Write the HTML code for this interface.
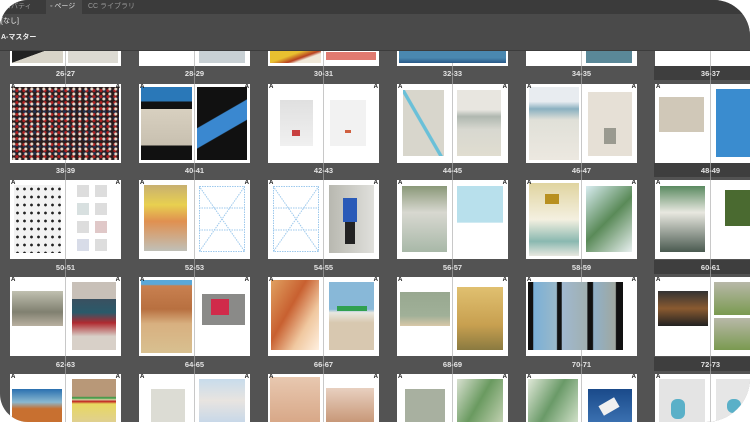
<!DOCTYPE html>
<html><head><meta charset="utf-8"><style>
html,body{margin:0;padding:0;background:#fff;width:750px;height:422px;overflow:hidden}
#w{position:absolute;left:0;top:0;width:750px;height:422px;background:#535353;border-radius:28px 36px 44px 28px;overflow:hidden;font-family:"Liberation Sans","Noto Sans CJK JP",sans-serif}
.sp{position:absolute;width:1px;background:#8a8a8a;top:50px;height:372px}
.s{position:absolute;width:111px;height:79px;background:#fff;overflow:hidden}
.s:before{content:"";position:absolute;left:55px;top:0;width:1px;height:100%;background:#c8c8c8}
.s i{position:absolute;display:block}
.s b{position:absolute;top:0;font-size:6px;font-weight:bold;color:#111;line-height:7px}
.s b.l{left:1px}.s b.r{right:1px}
.lb{position:absolute;width:111px;text-align:center;font-size:7.5px;color:#e4e4e4;line-height:9px;font-weight:bold}
.band{position:absolute;left:654px;width:96px;height:14px;background:#3e3e3e}
.wf{position:absolute}
.crowd{background:radial-gradient(circle at 30% 40%,#e8d8c8 1px,transparent 2px) 0 0/6px 5px,radial-gradient(circle at 70% 60%,#b02020 1.2px,transparent 2px) 0 0/7px 6px,radial-gradient(circle at 50% 50%,#203050 1.2px,transparent 2px) 0 0/5px 7px,#2a1c1c}
</style></head><body><div id="w">
<div class="band" style="top:66px"></div><div class="band" style="top:163px"></div><div class="band" style="top:260px"></div><div class="band" style="top:357px"></div>
<div class="sp" style="left:65px"></div><div class="sp" style="left:194px"></div><div class="sp" style="left:323px"></div><div class="sp" style="left:452px"></div><div class="sp" style="left:581px"></div><div class="sp" style="left:710px"></div>

<!-- row0 -->
<div class="s" style="left:10px;top:50px;height:16px"><i style="left:2px;top:0;width:51px;height:13px;background:linear-gradient(160deg,#222 40%,#d8d4c8 41%)"></i><i style="left:58px;top:0;width:50px;height:13px;background:#dcdad2"></i></div>
<div class="s" style="left:139px;top:50px;height:16px"><i style="left:60px;top:0;width:46px;height:13px;background:#c8d0d4"></i></div>
<div class="s" style="left:268px;top:50px;height:16px"><i style="left:2px;top:0;width:51px;height:13px;background:linear-gradient(160deg,#e8c030 40%,#b84020 60%,#f0e8d8 70%)"></i><i style="left:58px;top:2px;width:50px;height:8px;background:#e07a70"></i></div>
<div class="s" style="left:397px;top:50px;height:16px"><i style="left:2px;top:0;width:107px;height:13px;background:linear-gradient(#4a88b0 60%,#2a5a88)"></i></div>
<div class="s" style="left:526px;top:50px;height:16px"><i style="left:60px;top:0;width:46px;height:13px;background:#5a8898"></i></div>
<div class="s" style="left:655px;top:50px;height:16px"></div>
<div class="lb" style="left:10px;top:69px">26-27</div><div class="lb" style="left:139px;top:69px">28-29</div><div class="lb" style="left:268px;top:69px">30-31</div><div class="lb" style="left:397px;top:69px">32-33</div><div class="lb" style="left:526px;top:69px">34-35</div><div class="lb" style="left:655px;top:69px">36-37</div>

<!-- top panel -->
<div style="position:absolute;left:0;top:0;width:750px;height:14px;background:#3b3b3b"></div>
<div style="position:absolute;left:46px;top:0;width:36px;height:14px;background:#4a4a4a"></div>
<div style="position:absolute;left:4px;top:2px;font-size:7px;color:#9a9a9a;line-height:10px">ロパティ</div>
<div style="position:absolute;left:50px;top:2px;font-size:7px;color:#ddd;line-height:10px">◦ ページ</div>
<div style="position:absolute;left:88px;top:2px;font-size:7px;color:#9a9a9a;line-height:10px">CC ライブラリ</div>
<div style="position:absolute;left:0;top:14px;width:750px;height:36px;background:#4a4a4a;border-bottom:1px solid #3c3c3c"></div>
<div style="position:absolute;left:1px;top:17px;font-size:7px;color:#eee;line-height:10px">[なし]</div>
<div style="position:absolute;left:1px;top:33px;font-size:7px;color:#eee;font-weight:bold;line-height:10px">A-マスター</div>

<!-- row1 y84 -->
<div class="s" style="left:10px;top:84px"><i class="crowd" style="left:2px;top:3px;width:107px;height:73px"></i><b class="l">A</b><b class="r">A</b></div>
<div class="s" style="left:139px;top:84px"><i style="left:2px;top:3px;width:51px;height:73px;background:linear-gradient(#2a78b8 20%,#111 20%,#111 30%,#d8d0c0 30%,#c8c0b0 80%,#111 80%)"></i><i style="left:58px;top:3px;width:50px;height:73px;background:linear-gradient(150deg,#111 40%,#3a88d0 41%,#3a88d0 60%,#111 61%)"></i><b class="l">A</b><b class="r">A</b></div>
<div class="s" style="left:268px;top:84px"><i style="left:12px;top:16px;width:33px;height:46px;background:linear-gradient(#e0e0e0,#f0f0f0)"></i><i style="left:24px;top:46px;width:8px;height:6px;background:#c84040"></i><i style="left:62px;top:16px;width:36px;height:46px;background:#f2f2f2"></i><i style="left:77px;top:46px;width:6px;height:3px;background:#d06040"></i><b class="l">A</b><b class="r">A</b></div>
<div class="s" style="left:397px;top:84px"><i style="left:6px;top:6px;width:41px;height:66px;background:linear-gradient(60deg,#d8d6cc 45%,#6ac0d8 46%,#6ac0d8 50%,#d8d6cc 51%)"></i><i style="left:60px;top:6px;width:44px;height:66px;background:linear-gradient(#e8e6e0 30%,#b0b8b0 40%,#d8d8d0 60%,#e0ddd0)"></i><b class="l">A</b><b class="r">A</b></div>
<div class="s" style="left:526px;top:84px"><i style="left:3px;top:3px;width:50px;height:73px;background:linear-gradient(#e8ecf0 20%,#8ab0c0 30%,#e0e0d8 45%,#ece8e0)"></i><i style="left:62px;top:8px;width:44px;height:64px;background:#e6e0d6"></i><i style="left:78px;top:44px;width:12px;height:16px;background:#9a9a90"></i><b class="l">A</b><b class="r">A</b></div>
<div class="s" style="left:655px;top:84px"><i style="left:4px;top:13px;width:45px;height:35px;background:#d0c8b8"></i><i style="left:61px;top:5px;width:40px;height:68px;background:#3a8ccf"></i><b class="l">A</b></div>
<div class="lb" style="left:10px;top:166px">38-39</div><div class="lb" style="left:139px;top:166px">40-41</div><div class="lb" style="left:268px;top:166px">42-43</div><div class="lb" style="left:397px;top:166px">44-45</div><div class="lb" style="left:526px;top:166px">46-47</div><div class="lb" style="left:655px;top:166px">48-49</div>

<!-- row2 y180 -->
<div class="s" style="left:10px;top:180px"><i style="left:4px;top:5px;width:47px;height:68px;background:radial-gradient(circle,#222 1.2px,transparent 1.6px) 0 0/7px 8px,#f2f2f2"></i><i style="left:67px;top:5px;width:12px;height:12px;background:#ddd"></i><i style="left:85px;top:5px;width:12px;height:12px;background:#ddd"></i><i style="left:67px;top:23px;width:12px;height:12px;background:#d8e0e0"></i><i style="left:85px;top:23px;width:12px;height:12px;background:#ddd"></i><i style="left:67px;top:41px;width:12px;height:12px;background:#ddd"></i><i style="left:85px;top:41px;width:12px;height:12px;background:#e0c8c8"></i><i style="left:67px;top:59px;width:12px;height:12px;background:#d8dce8"></i><i style="left:85px;top:59px;width:12px;height:12px;background:#ddd"></i><b class="l">A</b><b class="r">A</b></div>
<div class="s" style="left:139px;top:180px"><i style="left:5px;top:5px;width:43px;height:66px;background:linear-gradient(#c8b070,#e8d050 30%,#e09050 55%,#c0c0b8)"></i><svg class="wf" style="left:60px;top:6px" width="46" height="66"><g fill="none" stroke="#9cc8ec" stroke-dasharray="1.5 1"><rect x=".5" y=".5" width="45" height="65"/><path d="M0 0L46 66M46 0L0 66M0 22H46M0 44H46"/></g></svg><b class="l">A</b><b class="r">A</b></div>
<div class="s" style="left:268px;top:180px"><svg class="wf" style="left:5px;top:6px" width="46" height="66"><g fill="none" stroke="#9cc8ec" stroke-dasharray="1.5 1"><rect x=".5" y=".5" width="45" height="65"/><path d="M0 0L46 66M46 0L0 66M0 22H46M0 44H46"/></g></svg><i style="left:61px;top:5px;width:45px;height:68px;background:linear-gradient(90deg,#b8b8b0,#e0e0dc)"></i><i style="left:75px;top:18px;width:14px;height:24px;background:#2a5ab8"></i><i style="left:77px;top:42px;width:10px;height:22px;background:#222"></i><b class="l">A</b><b class="r">A</b></div>
<div class="s" style="left:397px;top:180px"><i style="left:5px;top:6px;width:45px;height:66px;background:linear-gradient(#8a9878,#d8d8d0 40%,#a8b8a8)"></i><i style="left:60px;top:6px;width:46px;height:66px;background:linear-gradient(#b8e0ec 55%,#fff 56%)"></i><b class="l">A</b><b class="r">A</b></div>
<div class="s" style="left:526px;top:180px"><i style="left:3px;top:3px;width:50px;height:73px;background:linear-gradient(#e0d4a0,#f4f0e0 50%,#8ab8b0 80%,#e8e8e0)"></i><i style="left:19px;top:14px;width:14px;height:10px;background:#b89020"></i><i style="left:60px;top:6px;width:46px;height:66px;background:linear-gradient(135deg,#d8ecf0,#5a8a58 50%,#e8f0f0)"></i><b class="l">A</b><b class="r">A</b></div>
<div class="s" style="left:655px;top:180px"><i style="left:5px;top:6px;width:45px;height:66px;background:linear-gradient(#5a8a60,#e8e8e0 40%,#4a5a50)"></i><i style="left:70px;top:10px;width:30px;height:36px;background:#4a6a30"></i><b class="l">A</b></div>
<div class="lb" style="left:10px;top:263px">50-51</div><div class="lb" style="left:139px;top:263px">52-53</div><div class="lb" style="left:268px;top:263px">54-55</div><div class="lb" style="left:397px;top:263px">56-57</div><div class="lb" style="left:526px;top:263px">58-59</div><div class="lb" style="left:655px;top:263px">60-61</div>

<!-- row3 y277 -->
<div class="s" style="left:10px;top:277px"><i style="left:2px;top:14px;width:51px;height:35px;background:linear-gradient(#c0c0b0,#808070 60%,#b8b0a0)"></i><i style="left:62px;top:5px;width:44px;height:68px;background:linear-gradient(#c8c0b8 25%,#3a5060 25%,#2a5a6a 45%,#b02a30 60%,#d8d0c8 80%)"></i><b class="l">A</b><b class="r">A</b></div>
<div class="s" style="left:139px;top:277px"><i style="left:2px;top:3px;width:51px;height:73px;background:linear-gradient(#5aa8d8 6%,#c88050 8%,#b87040 40%,#d8b080 60%,#d8c090)"></i><i style="left:63px;top:17px;width:43px;height:31px;background:#8a8a88"></i><i style="left:72px;top:22px;width:18px;height:16px;background:#d02a4a"></i><b class="l">A</b><b class="r">A</b></div>
<div class="s" style="left:268px;top:277px"><i style="left:3px;top:3px;width:48px;height:70px;background:linear-gradient(120deg,#e0a060,#c86030 40%,#f0c8a0 70%,#fff0e0)"></i><i style="left:61px;top:5px;width:45px;height:68px;background:linear-gradient(#88b8d8 40%,#e8e8e0 45%,#d8c8b0 60%)"></i><i style="left:69px;top:29px;width:30px;height:5px;background:#30a050"></i><b class="l">A</b><b class="r">A</b></div>
<div class="s" style="left:397px;top:277px"><i style="left:3px;top:15px;width:50px;height:34px;background:linear-gradient(#98a890,#a0b098 70%,#d8c8a8)"></i><i style="left:60px;top:10px;width:46px;height:63px;background:linear-gradient(#e0c070,#c8a050 60%,#8a7a40)"></i><b class="l">A</b><b class="r">A</b></div>
<div class="s" style="left:526px;top:277px"><i style="left:2px;top:5px;width:95px;height:68px;background:linear-gradient(90deg,#111 5%,#7ab0d8 6%,#9ab8c8 30%,#111 31%,#111 35%,#a0b8d0 36%,#a0b0b0 62%,#111 63%,#111 68%,#90b0c8 69%,#a0a8a0 92%,#111 93%)"></i><b class="l">A</b><b class="r">A</b></div>
<div class="s" style="left:655px;top:277px"><i style="left:3px;top:14px;width:50px;height:35px;background:linear-gradient(#333,#8a5a30 50%,#222)"></i><i style="left:59px;top:5px;width:40px;height:33px;background:linear-gradient(#b8b8a8,#7a9a50)"></i><i style="left:59px;top:41px;width:40px;height:32px;background:linear-gradient(#b8b8a8,#7a9a50)"></i><b class="l">A</b></div>
<div class="lb" style="left:10px;top:360px">62-63</div><div class="lb" style="left:139px;top:360px">64-65</div><div class="lb" style="left:268px;top:360px">66-67</div><div class="lb" style="left:397px;top:360px">68-69</div><div class="lb" style="left:526px;top:360px">70-71</div><div class="lb" style="left:655px;top:360px">72-73</div>

<!-- row4 y374 -->
<div class="s" style="left:10px;top:374px;height:48px"><i style="left:2px;top:15px;width:50px;height:33px;background:linear-gradient(#2a70b0,#8ab8d0 40%,#c87030 60%)"></i><i style="left:62px;top:5px;width:44px;height:43px;background:linear-gradient(#b89878 40%,#2a9a40 44%,#d8d0a0 48%,#c02020 52%,#e8d860 58%,#e0d090)"></i><b class="l">A</b><b class="r">A</b></div>
<div class="s" style="left:139px;top:374px;height:48px"><i style="left:12px;top:15px;width:34px;height:33px;background:#dcdcd4"></i><i style="left:60px;top:5px;width:46px;height:43px;background:linear-gradient(#c8dcec,#e8e4e0 50%,#c8d8e8)"></i><b class="l">A</b><b class="r">A</b></div>
<div class="s" style="left:268px;top:374px;height:48px"><i style="left:2px;top:3px;width:50px;height:45px;background:linear-gradient(#e8c8b0,#d8a888)"></i><i style="left:58px;top:14px;width:48px;height:34px;background:linear-gradient(#e8d0c0,#c89878)"></i><b class="l">A</b><b class="r">A</b></div>
<div class="s" style="left:397px;top:374px;height:48px"><i style="left:8px;top:15px;width:40px;height:33px;background:#a8b0a0"></i><i style="left:60px;top:5px;width:46px;height:43px;background:linear-gradient(120deg,#d8e0d0,#6a9a60 50%,#c0d0b0)"></i><b class="l">A</b><b class="r">A</b></div>
<div class="s" style="left:526px;top:374px;height:48px"><i style="left:2px;top:5px;width:50px;height:43px;background:linear-gradient(120deg,#e0e8d8,#6a9a68 50%,#d0e0c8)"></i><i style="left:62px;top:15px;width:44px;height:33px;background:linear-gradient(#1a4a8a,#3a70b0)"></i><i style="left:74px;top:27px;width:18px;height:11px;background:#f0f0f0;transform:rotate(-30deg)"></i><b class="l">A</b><b class="r">A</b></div>
<div class="s" style="left:655px;top:374px;height:48px"><i style="left:4px;top:5px;width:46px;height:43px;background:#e4e4e4"></i><i style="left:16px;top:25px;width:14px;height:20px;background:#5ab0c8;border-radius:6px"></i><i style="left:61px;top:5px;width:40px;height:43px;background:#e6e6e6"></i><i style="left:72px;top:25px;width:14px;height:14px;background:#5ab0c8;border-radius:6px"></i><b class="l">A</b></div>
</div></body></html>
